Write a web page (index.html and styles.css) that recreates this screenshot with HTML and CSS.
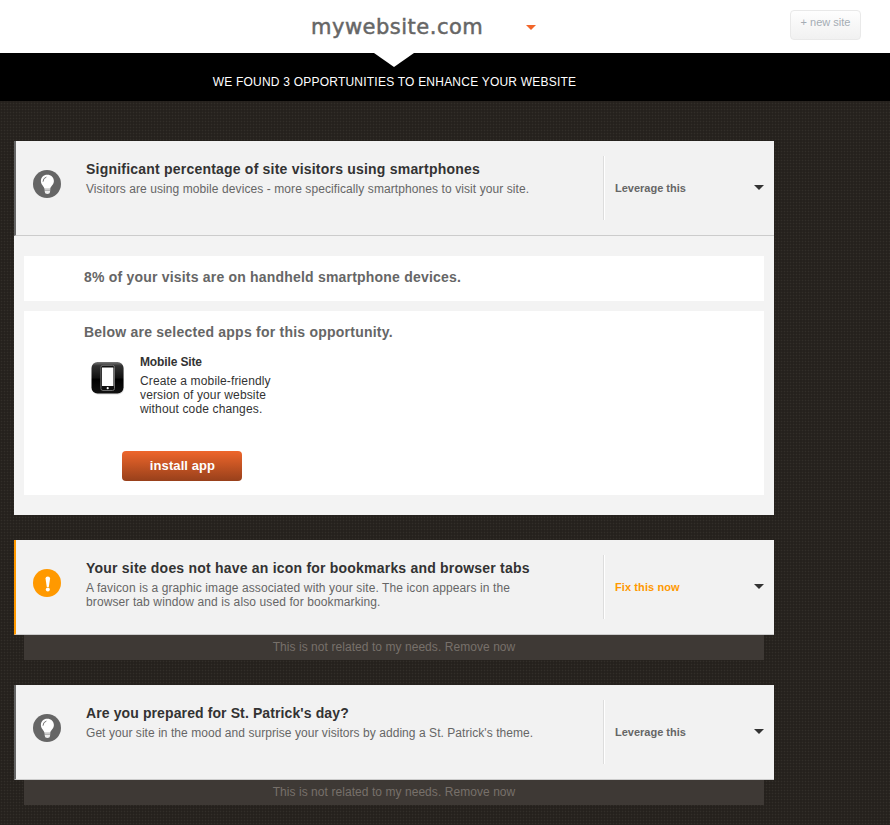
FILE: index.html
```html
<!DOCTYPE html>
<html lang="en">
<head>
<meta charset="utf-8">
<title>mywebsite.com</title>
<link rel="stylesheet" href="styles.css">
</head>
<body>
<svg width="0" height="0" class="defs" aria-hidden="true">
  <symbol id="bulb" viewBox="0 0 28 28">
    <circle cx="14" cy="14" r="14" fill="#666"/>
    <path d="M14.3 4.8c-3.8 0-6.4 2.7-6.4 6.2 0 3.9 3.2 5 3.5 7.8h5.9c.3-2.8 3.6-3.9 3.6-7.8 0-3.5-2.8-6.2-6.6-6.2z" fill="#fff"/>
    <path d="M11.5 19h5.8v1.2h-5.8z" fill="#ccc"/>
    <path d="M11.5 20.4h5.8l-.7 2.9q-2.2 1.2-4.4 0z" fill="#eee"/>
    <path d="M10 11.7q.1-3.7 3.4-4.6" fill="none" stroke="#777" stroke-width="1"/>
  </symbol>
</svg>
<header class="top">
  <h1 class="site">mywebsite.com</h1>
  <span class="site-arrow"></span>
  <a class="new-site">+ new site</a>
</header>
<div class="banner"><p>WE FOUND 3 OPPORTUNITIES TO ENHANCE YOUR WEBSITE</p></div>
<main class="list">
  <section class="item">
    <div class="head">
      <svg class="icon"><use href="#bulb"/></svg>
      <div class="text">
        <h2>Significant percentage of site visitors using smartphones</h2>
        <p>Visitors are using mobile devices - more specifically smartphones to visit your site.</p>
      </div>
      <div class="action"><span>Leverage this</span><i class="caret"></i></div>
    </div>
    <div class="body">
      <div class="panel"><h3>8% of your visits are on handheld smartphone devices.</h3></div>
      <div class="panel apps">
        <h3>Below are selected apps for this opportunity.</h3>
        <div class="app">
          <svg class="app-icon" viewBox="0 0 36 36">
            <defs>
              <linearGradient id="tile" x2="0" y2="1"><stop offset="0" stop-color="#777"/><stop offset=".12" stop-color="#333"/><stop offset=".5" stop-color="#111"/><stop offset=".55" stop-color="#000"/><stop offset="1" stop-color="#111"/></linearGradient>
            </defs>
            <rect x="2" y="3" width="32" height="31.5" rx="6" fill="#ddd"/>
            <rect x="1.5" y="2" width="32" height="31.5" rx="6" fill="url(#tile)"/>
            <rect x="10.9" y="5.3" width="13.6" height="25.2" rx="2" fill="#111" stroke="#777" stroke-width=".9"/>
            <rect x="12" y="7.5" width="11.4" height="18.5" fill="#fff"/>
            <circle cx="17.7" cy="28.2" r="1.1" fill="#fff"/>
          </svg>
          <div class="app-text">
            <h4>Mobile Site</h4>
            <p>Create a mobile-friendly<br>version of your website<br>without code changes.</p>
          </div>
        </div>
        <a class="install">install app</a>
      </div>
    </div>
  </section>
  <section class="item">
    <div class="head warn">
      <svg class="icon" viewBox="0 0 28 28">
        <circle cx="14" cy="14" r="14" fill="#f90"/>
        <path d="M12.5 9.4q0-1.8 2.3-1.8t2.3 1.8l-1.3 8.6h-2z" fill="#fff"/>
        <circle cx="14.8" cy="20.4" r="2" fill="#fff"/>
      </svg>
      <div class="text">
        <h2>Your site does not have an icon for bookmarks and browser tabs</h2>
        <p>A favicon is a graphic image associated with your site. The icon appears in the<br>browser tab window and is also used for bookmarking.</p>
      </div>
      <div class="action"><span>Fix this now</span><i class="caret"></i></div>
    </div>
    <div class="remove">This is not related to my needs. Remove now</div>
  </section>
  <section class="item seasonal">
    <div class="head">
      <svg class="icon"><use href="#bulb"/></svg>
      <div class="text">
        <h2>Are you prepared for St. Patrick's day?</h2>
        <p>Get your site in the mood and surprise your visitors by adding a St. Patrick's theme.</p>
      </div>
      <div class="action"><span>Leverage this</span><i class="caret"></i></div>
    </div>
    <div class="remove">This is not related to my needs. Remove now</div>
  </section>
</main>
</body>
</html>
```
FILE: styles.css
```css
* { box-sizing: border-box; }
body {
  margin: 0;
  height: 825px;
  overflow: hidden;
  font: 12px/14px "Liberation Sans", Arial, sans-serif;
  color: #333;
  background: #25211d radial-gradient(circle at 1.5px 1.5px, #322e29 0, #322e29 .6px, #25211d 1.1px) 0 0 / 3px 3px;
}
h1, h2, h3, h4, p { margin: 0; }
.defs { display: block; }
.top {
  display: flex;
  align-items: flex-start;
  height: 53px;
  padding: 10px 29px 0 311px;
  background: #fff;
}
.site {
  width: 215px;
  font: 21px/34px "DejaVu Sans", Verdana, sans-serif;
  letter-spacing: .5px;
  -webkit-text-stroke: .5px #666;
  color: #666;
  white-space: nowrap;
}
.site-arrow, .caret {
  width: 10px;
  height: 5px;
  background: #f26529;
  clip-path: polygon(0 0, 100% 0, 50% 100%);
}
.site-arrow { margin-top: 15px; }
.new-site {
  width: 71px;
  height: 30px;
  margin-left: auto;
  border: 1px solid #e9e9e9;
  border-radius: 4px;
  background: linear-gradient(#fefefe, #f1f1f1);
  font-size: 11px;
  line-height: 23px;
  text-align: center;
  color: #a4acb4;
}
.banner {
  height: 48px;
  background: #000;
  color: #fff;
}
.banner::before {
  content: "";
  display: block;
  width: 40px;
  height: 14px;
  margin-left: 374px;
  background: #fff;
  clip-path: polygon(0 0, 100% 0, 50% 100%);
}
.banner p {
  width: 789px;
  padding-top: 8px;
  letter-spacing: .22px;
  text-align: center;
}
.list {
  display: flex;
  flex-direction: column;
  gap: 25px;
  width: 760px;
  margin: 40px 0 0 14px;
}
.head {
  display: flex;
  height: 95px;
  padding: 14px 0 0 17px;
  border-left: 2px solid #666;
  border-bottom: 1px solid #ccc;
  background: #f2f2f2;
}
.warn { border-left-color: #f90; }
.icon {
  width: 28px;
  height: 28px;
  margin-top: 15px;
}
.text {
  width: 542px;
  padding: 6px 0 0 25px;
  letter-spacing: .085px;
  color: #666;
  white-space: nowrap;
}
.text h2 {
  margin-bottom: 5px;
  font-size: 14px;
  line-height: 16px;
  letter-spacing: .21px;
  color: #333;
}
.warn .text { letter-spacing: .11px; }
.seasonal .text { letter-spacing: .055px; }
.seasonal h2 { letter-spacing: .11px; }
.action {
  display: flex;
  align-items: flex-start;
  justify-content: space-between;
  width: 171px;
  height: 64px;
  margin-top: 1px;
  padding: 25px 10px 0 11px;
  border-left: 1px solid #ddd;
  box-shadow: inset 1px 0 #fff;
  font-size: 11px;
  font-weight: bold;
  color: #666;
}
.warn .action {
  letter-spacing: .1px;
  color: #f90;
}
.caret {
  margin-top: 4px;
  background: #333;
}
.body {
  display: flex;
  flex-direction: column;
  gap: 10px;
  height: 279px;
  padding: 20px 10px;
  background: #f3f3f3;
}
.panel {
  height: 45px;
  padding: 13px 60px 0;
  background: #fff;
}
.apps { height: 184px; }
.panel h3 {
  font-size: 14px;
  line-height: 16px;
  letter-spacing: .2px;
  color: #666;
}
.apps h3 { letter-spacing: .23px; }
.app {
  display: flex;
  padding: 10px 0 0 6px;
}
.app-icon {
  width: 36px;
  height: 36px;
  margin-top: 10px;
}
.app-text {
  padding: 5px 0 0 14px;
  letter-spacing: .14px;
}
.app-text h4 {
  margin-bottom: 5px;
  font-size: 12px;
  letter-spacing: -.13px;
}
.install {
  display: block;
  width: 120px;
  height: 30px;
  margin: 35px 0 0 38px;
  border-radius: 4px;
  background: linear-gradient(#ee662b, #98401b);
  font-size: 13px;
  font-weight: bold;
  line-height: 30px;
  letter-spacing: .09px;
  text-indent: 1px;
  text-align: center;
  color: #fff;
}
.remove {
  height: 25px;
  margin: 0 10px;
  background: #3e3935;
  line-height: 24px;
  letter-spacing: .06px;
  text-align: center;
  color: #77706a;
}
```
